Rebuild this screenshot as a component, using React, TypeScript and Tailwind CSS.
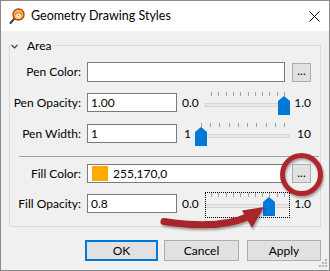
import React from "react";

function Thumb() {
  return (
    <svg width="12" height="19" viewBox="0 0 12 19" className="block">
      <polygon points="0,5 6,0 12,5 12,19 0,19" fill="#0078d7" />
    </svg>
  );
}

function Slider({
  width,
  ticks,
  value,
  focused,
}: {
  width: number;
  ticks: number;
  value: number;
  focused?: boolean;
}) {
  const span = width - 12;
  const pos = (i: number) => 6 + (i * span) / (ticks - 1);
  return (
    <div className="relative h-[26px] shrink-0 self-start -mt-[2px]" style={{ width }}>
      {Array.from({ length: ticks }).map((_, i) => (
        <div
          key={i}
          className="absolute top-[1px] h-[4px] w-px bg-[#a3a3a3]"
          style={{ left: Math.round(pos(i)) }}
        />
      ))}
      <div className="absolute left-0 right-0 top-[12px] h-[4px] bg-[#e7e7e7] border border-[#d6d6d6]" />
      <div className="absolute top-[5px]" style={{ left: Math.round(pos(value)) - 6 }}>
        <Thumb />
      </div>
      {focused && <div className="absolute inset-0 border border-dotted border-black" />}
    </div>
  );
}

function Label({ children }: { children: React.ReactNode }) {
  return <div className="w-[71px] shrink-0 text-right whitespace-nowrap">{children}</div>;
}

function Input({ wide, children }: { wide?: boolean; children?: React.ReactNode }) {
  return (
    <div
      className={
        wide
          ? "ml-[6px] w-[198px] h-full shrink-0 bg-white border border-[#7a7a7a] flex items-center pl-[3px] whitespace-nowrap"
          : "ml-[6px] w-[90px] h-full shrink-0 bg-white border border-[#7a7a7a] flex items-center pl-[3px] whitespace-nowrap"
      }
    >
      {children}
    </div>
  );
}

function DotsButton() {
  return (
    <div className="ml-[7px] w-[19px] h-[19px] shrink-0 bg-[#e1e1e1] border border-[#adadad] flex items-center justify-center leading-none pb-[2px]">
      ...
    </div>
  );
}

export default function App() {
  return (
    <div className="relative w-[330px] h-[271px] border border-[#8a8a8a] flex flex-col font-[family-name:Lato,sans-serif] text-[12px] text-black overflow-hidden">
      {/* Title bar */}
      <div className="h-[30px] bg-white flex items-center shrink-0">
        <svg className="ml-[8px] shrink-0" width="16" height="16" viewBox="0 0 16 16">
          <line x1="6" y1="10" x2="1.5" y2="15" stroke="#404040" strokeWidth="2" strokeLinecap="round" />
          <circle cx="9.5" cy="6.5" r="5.5" fill="#f5c242" stroke="#c0392b" strokeWidth="1.4" />
          <path d="M5 6.5 Q9.5 2 14 6.5" fill="#e8553a" />
          <circle cx="9.5" cy="7.5" r="2.2" fill="#ffffff" />
          <circle cx="9.5" cy="7.5" r="1" fill="#e67e22" />
        </svg>
        <span className="ml-[6px] text-[12.5px] whitespace-nowrap">Geometry Drawing Styles</span>
        <svg className="ml-auto mr-[9px] shrink-0" width="11" height="11" viewBox="0 0 11 11">
          <path d="M0.5 0.5 L10.5 10.5 M10.5 0.5 L0.5 10.5" stroke="#000" strokeWidth="1" />
        </svg>
      </div>

      {/* Body */}
      <div className="flex-1 bg-[#f0f0f0] flex flex-col">
        <div className="mt-[14px] ml-[8px] w-[312px] h-[182px] shrink-0 border border-[#dcdcdc] flex flex-col">
          <div className="-mt-[8px] h-[16px] flex">
            <div className="bg-[#f0f0f0] flex items-center pl-[1px] pr-[2px]">
              <svg width="7" height="5" viewBox="0 0 7 5" className="shrink-0">
                <polyline points="0.5,0.8 3.5,3.8 6.5,0.8" fill="none" stroke="#333" strokeWidth="1.2" />
              </svg>
              <span className="ml-[9px]">Area</span>
            </div>
          </div>

          {/* Pen Color */}
          <div className="mt-[8px] h-[20px] flex items-center">
            <Label>Pen Color:</Label>
            <Input wide />
            <DotsButton />
          </div>

          {/* Pen Opacity */}
          <div className="mt-[11px] h-[19px] flex items-center">
            <Label>Pen Opacity:</Label>
            <Input>1.00</Input>
            <div className="ml-[5px] w-[23px] shrink-0">0.0</div>
            <Slider width={85} ticks={11} value={10} />
            <div className="w-[21px] shrink-0 text-right">1.0</div>
          </div>

          {/* Pen Width */}
          <div className="mt-[12px] h-[19px] flex items-center">
            <Label>Pen Width:</Label>
            <Input>1</Input>
            <div className="ml-[5px] w-[13px] pl-[2px] shrink-0">1</div>
            <Slider width={95} ticks={10} value={0} />
            <div className="w-[21px] shrink-0 text-right">10</div>
          </div>

          <div className="mt-[13px] ml-[9px] mr-[1px] h-px bg-[#a0a0a0]" />

          {/* Fill Color */}
          <div className="mt-[7px] h-[19px] flex items-center">
            <Label>Fill Color:</Label>
            <Input wide>
              <div className="ml-[1px] w-[16px] h-[15px] bg-[#ffaa00] shrink-0" />
              <span className="ml-[5px]">255,170,0</span>
            </Input>
            <DotsButton />
          </div>

          {/* Fill Opacity */}
          <div className="mt-[11px] h-[19px] flex items-center">
            <Label>Fill Opacity:</Label>
            <Input>0.8</Input>
            <div className="ml-[5px] w-[23px] shrink-0">0.0</div>
            <Slider width={85} ticks={11} value={8} focused />
            <div className="w-[21px] shrink-0 text-right">1.0</div>
          </div>
        </div>

        {/* Buttons */}
        <div className="mt-[13px] flex justify-end pr-[8px]">
          <div className="w-[73px] h-[21px] mr-[6px] bg-[#e1e1e1] border-2 border-[#0078d7] flex items-center justify-center">
            OK
          </div>
          <div className="w-[75px] h-[21px] mr-[8px] bg-[#e1e1e1] border border-[#adadad] flex items-center justify-center">
            Cancel
          </div>
          <div className="w-[74px] h-[21px] bg-[#e1e1e1] border border-[#adadad] flex items-center justify-center">
            Apply
          </div>
        </div>
      </div>

      {/* Resize grip */}
      <svg className="absolute right-[1px] bottom-[2px]" width="10" height="10" viewBox="0 0 10 10">
        <rect x="7" y="1" width="2" height="2" fill="#b5b5b5" />
        <rect x="4" y="4" width="2" height="2" fill="#b5b5b5" />
        <rect x="7" y="4" width="2" height="2" fill="#b5b5b5" />
        <rect x="1" y="7" width="2" height="2" fill="#b5b5b5" />
        <rect x="4" y="7" width="2" height="2" fill="#b5b5b5" />
        <rect x="7" y="7" width="2" height="2" fill="#b5b5b5" />
      </svg>

      {/* Annotation overlay */}
      <svg className="absolute left-[-1px] top-[-1px] pointer-events-none" width="330" height="271" viewBox="0 0 330 271">
        <defs>
          <filter id="sh" x="-20%" y="-20%" width="140%" height="160%">
            <feDropShadow dx="1" dy="2" stdDeviation="1.2" floodColor="#000" floodOpacity="0.35" />
          </filter>
        </defs>
        <g filter="url(#sh)">
          <circle cx="301.5" cy="174.5" r="19" fill="none" stroke="#b0282d" strokeWidth="5" />
        </g>
        <g filter="url(#sh)">
          <path d="M164 221.5 Q218 230 247 217" fill="none" stroke="#a8262b" strokeWidth="7" strokeLinecap="round" />
          <polygon points="242,210.5 264,207 252,228" fill="#a8262b" />
        </g>
      </svg>
    </div>
  );
}
